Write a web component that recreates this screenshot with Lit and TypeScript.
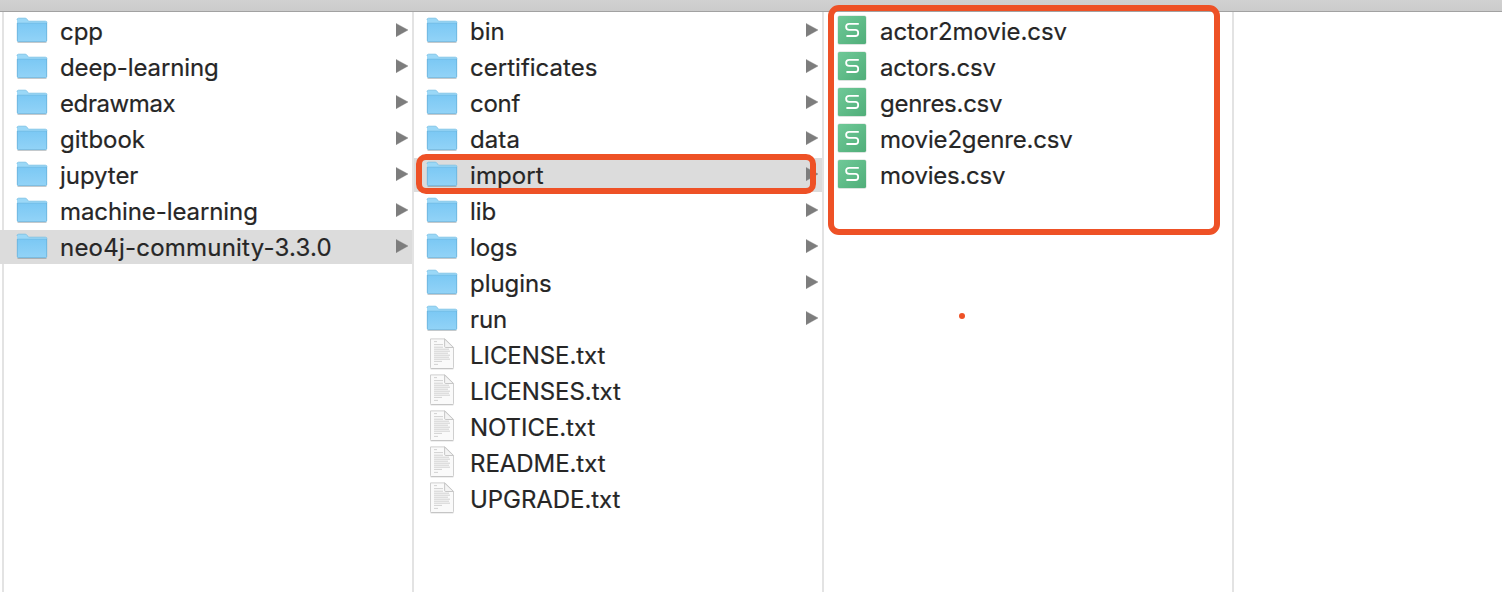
import { LitElement, html, css, svg } from "lit";
import { customElement, property } from "lit/decorators.js";
import { classMap } from "lit/directives/class-map.js";
import { styleMap } from "lit/directives/style-map.js";

type Kind = "folder" | "text" | "sheet";
interface Entry { name: string; kind: Kind; selected?: boolean; marked?: boolean }

const folders = (...names: string[]): Entry[] => names.map((name) => ({ name, kind: "folder" }));

const columns: Entry[][] = [
  [
    ...folders("cpp", "deep-learning", "edrawmax", "gitbook", "jupyter", "machine-learning"),
    { name: "neo4j-community-3.3.0", kind: "folder", selected: true },
  ],
  [
    ...folders("bin", "certificates", "conf", "data"),
    { name: "import", kind: "folder", selected: true, marked: true },
    ...folders("lib", "logs", "plugins", "run"),
    ...["LICENSE.txt", "LICENSES.txt", "NOTICE.txt", "README.txt", "UPGRADE.txt"].map(
      (name): Entry => ({ name, kind: "text" })
    ),
  ],
  ["actor2movie.csv", "actors.csv", "genres.csv", "movie2genre.csv", "movies.csv"].map(
    (name): Entry => ({ name, kind: "sheet" })
  ),
  [],
];

// Letter spacing in pixels for names that need other than the default.
const tracking: Record<string, number> = {
  "deep-learning": -0.13,
  edrawmax: -0.4,
  gitbook: 0,
  "machine-learning": -0.09,
  "neo4j-community-3.3.0": 0.22,
  import: 0.1,
  certificates: 0.02,
  data: 0.1,
  conf: -0.3,
  "actors.csv": -0.2,
  "genres.csv": -0.28,
  "movie2genre.csv": -0.17,
  "movies.csv": -0.25,
};

const textLines = [3.6, 6.6, 9.2, 11.2, 13.2, 15.2, 17.2, 19.2, 21.2, 23.4, 26.4];
const lineEnds = [11, 17, 17, 23, 24, 22, 24, 23, 24, 16, 12];

const icons = {
  folder: svg`
    <defs>
      <linearGradient id="f" x1="0" y1="0" x2="0" y2="1">
        <stop offset="0" stop-color="#7bc8f4"/><stop offset="1" stop-color="#92d3f7"/>
      </linearGradient>
    </defs>
    <path d="M1.5 28.4H30.5" stroke="#000" stroke-opacity=".2" stroke-width="1.2"/>
    <path d="M1 6Q1 4.2 2.6 4.2H9.2Q10.4 4.2 11 5.2L11.8 6.4Q12.3 7.2 13.2 7.2H29.4Q31 7.2 31 8.8V26H1Z" fill="#9bd8f7"/>
    <path d="M1 6Q1 4.2 2.6 4.2H9.2Q10.4 4.2 11 5.2L11.8 6.4Q12.3 7.2 13.2 7.2H29.4Q31 7.2 31 8.8" fill="none" stroke="#76bfe5" stroke-width=".8"/>
    <path d="M1 9H31V26.4Q31 27.8 29.6 27.8H2.4Q1 27.8 1 26.4Z" fill="url(#f)"/>
    <path d="M1.4 9.2H30.6" stroke="#72bce5" stroke-width=".8"/>
    <path d="M1.3 9V26.4Q1.3 27.6 2.4 27.6H29.6Q30.7 27.6 30.7 26.4V9" fill="none" stroke="#64add5" stroke-width=".7"/>`,
  text: svg`
    <path d="M4.5 .9H19L27.5 9.4V29.6Q27.5 30.5 26.6 30.5H5.4Q4.5 30.5 4.5 29.6Z" fill="#fafafa" stroke="#cfcfcf" stroke-width="1"/>
    <path d="M4.6 30.8H27.4" stroke="#bcbcbc" stroke-width=".8"/>
    ${textLines.map((y, i) => svg`<path d=${`M8 ${y}H${lineEnds[i]}`} stroke="#cdcdcd" stroke-width=".9"/>`)}
    <path d="M18.6 1V8.4Q18.6 9.5 19.7 9.5H27.4Z" fill="#f4f4f4" stroke="#c2c2c2" stroke-width=".9"/>`,
  sheet: svg`
    <defs>
      <linearGradient id="s" x1="0" y1="0" x2="1" y2="1">
        <stop offset="0" stop-color="#6fc998"/><stop offset="1" stop-color="#50ae79"/>
      </linearGradient>
    </defs>
    <rect x="1.5" y="1.5" width="29" height="29.2" rx="2" fill="#b9c9c0" opacity=".65"/>
    <rect x="2" y="2" width="28" height="28" rx="1.6" fill="url(#s)"/>
    <path d="M22.8 9.8H13.2Q10.1 9.8 10.1 12.7Q10.1 15.8 13.2 15.8H19.3Q22.2 15.8 22.2 18.9Q22.2 22 19.3 22H10.4" fill="none" stroke="#fff" stroke-width="1.8"/>`,
};

@customElement("file-row")
class FileRow extends LitElement {
  @property({ attribute: false }) entry!: Entry;

  static styles = css`
    :host { display: block; height: 34px; position: relative; }
    .row {
      height: 34px; display: flex; align-items: center;
      padding: 0 4px 0 12px; box-sizing: border-box;
    }
    .selected { background: #dcdcdc; }
    .icon { width: 32px; height: 34px; flex: none; }
    .name {
      flex: 1; margin-left: 12px; padding-top: 2px; white-space: nowrap; color: #262626;
      font: 400 24px/34px Inter, "Liberation Sans", sans-serif;
      -webkit-text-stroke: 0.2px #262626;
    }
    .arrow { width: 12px; height: 34px; flex: none; }
    .mark {
      position: absolute; left: 2px; top: -4px; width: 400px; height: 40px;
      box-sizing: border-box; border: 6px solid #ee5126; border-radius: 10px;
    }
  `;

  render() {
    const { name, kind, selected, marked } = this.entry;
    return html`
      <div class=${classMap({ row: true, selected: !!selected })}>
        <svg class="icon" viewBox="0 0 32 34">${icons[kind]}</svg>
        <span class="name" style=${styleMap({ letterSpacing: `${tracking[name] ?? -0.06}px` })}>${name}</span>
        ${kind === "folder"
          ? html`<svg class="arrow" viewBox="0 0 12 34"><path d="M0 9.4L12 16L0 22.8Z" fill="#7d7d7d" stroke="#7d7d7d" stroke-width=".4"/></svg>`
          : ""}
      </div>
      ${marked ? html`<div class="mark"></div>` : ""}
    `;
  }
}

@customElement("app-root")
class AppRoot extends LitElement {
  static styles = css`
    :host {
      display: flex; flex-direction: column; position: relative;
      width: 1502px; height: 592px; overflow: hidden; background: #fff;
    }
    .toolbar {
      flex: none; height: 12px; box-sizing: border-box;
      background: linear-gradient(#d1d1d1, #cbcbcb); border-bottom: 1px solid #a2a2a2;
    }
    .columns { flex: 1; display: grid; grid-template-columns: 410px 410px 410px 270px; padding-left: 2px; }
    .column {
      display: flex; flex-direction: column; gap: 2px; padding-top: 2px;
      border-left: 2px solid #e3e3e3; min-width: 0;
    }
    .column:first-child .edge { margin-left: -4px; padding-left: 4px; background: #dcdcdc; }
    .outline {
      position: absolute; left: 828px; top: 5px; width: 392px; height: 230px;
      box-sizing: border-box; border: 6px solid #ee5126; border-radius: 11px;
    }
    .dot {
      position: absolute; left: 958.5px; top: 312.7px; width: 6.6px; height: 6.6px;
      border-radius: 50%; background: #ee5126;
    }
  `;

  render() {
    return html`
      <div class="toolbar"></div>
      <div class="columns">
        ${columns.map((entries) => html`
          <div class="column">
            ${entries.map((entry) => html`<file-row class=${classMap({ edge: !!entry.selected })} .entry=${entry}></file-row>`)}
          </div>`)}
      </div>
      <div class="outline"></div>
      <div class="dot"></div>
    `;
  }
}
